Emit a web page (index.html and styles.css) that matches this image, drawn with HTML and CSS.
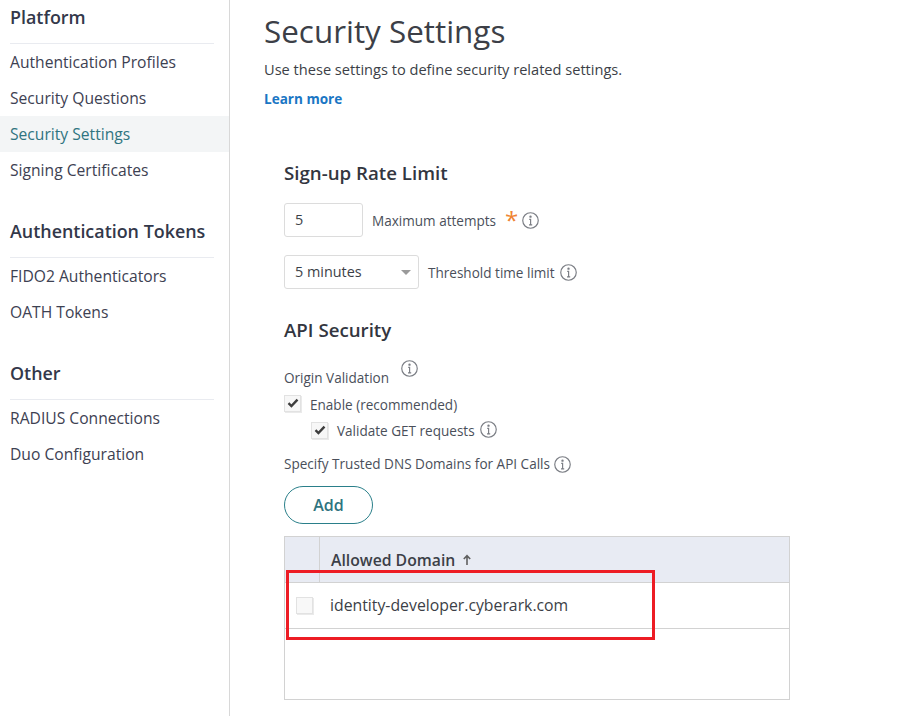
FILE: index.html
```html
<!DOCTYPE html>
<html lang="en">
<head>
<meta charset="utf-8">
<title>Security Settings</title>
<link rel="stylesheet" href="styles.css">
</head>
<body>
<div class="app">
  <nav class="sidebar">
    <h2 class="nav-head first">Platform</h2>
    <a class="nav-item">Authentication Profiles</a>
    <a class="nav-item">Security Questions</a>
    <a class="nav-item active">Security Settings</a>
    <a class="nav-item">Signing Certificates</a>
    <h2 class="nav-head">Authentication Tokens</h2>
    <a class="nav-item">FIDO2 Authenticators</a>
    <a class="nav-item">OATH Tokens</a>
    <h2 class="nav-head">Other</h2>
    <a class="nav-item">RADIUS Connections</a>
    <a class="nav-item">Duo Configuration</a>
  </nav>
  <main class="main">
    <h1 class="title">Security Settings</h1>
    <p class="desc">Use these settings to define security related settings.</p>
    <a class="learn">Learn more</a>
    <section class="form">
      <h3 class="sec-head rate">Sign-up Rate Limit</h3>
      <div class="row row-attempts">
        <div class="input">5</div>
        <span class="label">Maximum attempts</span>
        <span class="star">*</span>
        <svg class="info" viewBox="0 0 16 16"><circle cx="8" cy="8" r="7.3"/><circle class="dot" cx="8" cy="4.4" r="1.1"/><path d="M6.8 7h1.3v5M6.6 12.1h3"/></svg>
      </div>
      <div class="row row-threshold">
        <div class="select">5 minutes<span class="caret"></span></div>
        <span class="label">Threshold time limit</span>
        <svg class="info" viewBox="0 0 16 16"><circle cx="8" cy="8" r="7.3"/><circle class="dot" cx="8" cy="4.4" r="1.1"/><path d="M6.8 7h1.3v5M6.6 12.1h3"/></svg>
      </div>
      <h3 class="sec-head api">API Security</h3>
      <div class="origin">
        <span class="label">Origin Validation</span>
        <svg class="info raised" viewBox="0 0 16 16"><circle cx="8" cy="8" r="7.3"/><circle class="dot" cx="8" cy="4.4" r="1.1"/><path d="M6.8 7h1.3v5M6.6 12.1h3"/></svg>
      </div>
      <div class="check-row enable">
        <span class="check"><svg viewBox="0 0 12 10"><path d="M1.5 5.2 4.4 8 10.5 1.6"/></svg></span>
        <span class="label">Enable (recommended)</span>
      </div>
      <div class="check-row nested">
        <span class="check"><svg viewBox="0 0 12 10"><path d="M1.5 5.2 4.4 8 10.5 1.6"/></svg></span>
        <span class="label">Validate GET requests</span>
        <svg class="info" viewBox="0 0 16 16"><circle cx="8" cy="8" r="7.3"/><circle class="dot" cx="8" cy="4.4" r="1.1"/><path d="M6.8 7h1.3v5M6.6 12.1h3"/></svg>
      </div>
      <div class="trusted">
        <span class="label">Specify Trusted DNS Domains for API Calls</span>
        <svg class="info" viewBox="0 0 16 16"><circle cx="8" cy="8" r="7.3"/><circle class="dot" cx="8" cy="4.4" r="1.1"/><path d="M6.8 7h1.3v5M6.6 12.1h3"/></svg>
      </div>
      <button class="add" type="button">Add</button>
      <div class="grid">
        <div class="grid-head">
          <div class="cell-check"></div>
          <div class="cell-name">Allowed Domain <svg class="arrow" viewBox="0 0 10 12"><path d="M5 11V2M1.8 5 5 1.6 8.2 5"/></svg></div>
        </div>
        <div class="grid-row">
          <div class="cell-check body"><span class="check empty"></span></div>
          <div class="cell-value">identity-developer.cyberark.com</div>
        </div>
        <div class="grid-empty"></div>
        <div class="highlight"></div>
      </div>
    </section>
  </main>
</div>
</body>
</html>
```
FILE: styles.css
```css
* { box-sizing: border-box; }
html, body { margin: 0; padding: 0; background: #fff; }
body {
  width: 920px;
  height: 716px;
  overflow: hidden;
  font-family: "Open Sans", "Liberation Sans", sans-serif;
  color: #3a3f4b;
}
.app { display: flex; height: 716px; }
.sidebar {
  width: 230px;
  flex: none;
  border-right: 1px solid #d8d8d8;
  height: 716px;
}
.nav-head {
  margin: 31px 15px 0 10px;
  padding-bottom: 13px;
  height: 39px;
  border-bottom: 1px solid #e9ebf0;
  font-size: 17.9px;
  line-height: 25px;
  font-weight: 600;
  color: #33384a;
}
.nav-head.first { margin-top: 5px; }
.nav-item {
  display: block;
  height: 36px;
  padding-left: 10px;
  font-size: 15.65px;
  line-height: 36px;
  color: #3d4152;
}
.nav-item.active { background: #f3f5f6; color: #2f7480; }
.main { flex: 1; padding-left: 34px; min-width: 0; }
.title {
  margin: 10px 0 0;
  font-size: 31.4px;
  line-height: 41px;
  font-weight: 400;
  color: #3c3f47;
}
.desc { margin: 8px 0 0; font-size: 14.6px; line-height: 20px; color: #3c3f47; }
.learn {
  display: block;
  margin-top: 10px;
  font-size: 13.55px;
  line-height: 20px;
  font-weight: 700;
  color: #1a76c4;
}
.form { padding-left: 20px; width: 526px; }
.sec-head {
  margin: 0;
  font-size: 18.7px;
  line-height: 25px;
  font-weight: 600;
  color: #33363f;
}
.sec-head.rate { margin-top: 51px; }
.row { display: flex; align-items: center; }
.row-attempts { margin-top: 18px; height: 34px; }
.row-threshold { margin-top: 18px; height: 34px; }
.input, .select {
  height: 34px;
  border: 1px solid #dcdcdc;
  border-radius: 3px;
  font-size: 14.4px;
  line-height: 32px;
  padding-left: 10px;
  color: #3c3f47;
}
.input { width: 79px; }
.select { width: 135px; position: relative; }
.caret {
  position: absolute;
  right: 7px;
  top: 14px;
  width: 0;
  height: 0;
  border-left: 5px solid transparent;
  border-right: 5px solid transparent;
  border-top: 5px solid #9a9a9a;
}
.label { font-size: 13.55px; line-height: 20px; color: #4a4f5a; }
.row .label { margin-left: 9px; margin-top: 2px; }
.star {
  margin-left: 9px;
  font-size: 24px;
  line-height: 20px;
  height: 20px;
  color: #ef8433;
}
.info {
  width: 17px;
  height: 17px;
  flex: none;
  fill: none;
  stroke: #7a7d84;
  stroke-width: 1.1;
}
.info .dot { fill: #7a7d84; stroke: none; }
.row-attempts .info { margin-left: 4px; }
.row-threshold .info { margin-left: 5px; }
.sec-head.api { margin-top: 28px; }
.origin { display: flex; margin-top: 26px; height: 20px; align-items: center; }
.info.raised { margin-left: 12px; position: relative; top: -10px; }
.check-row { display: flex; align-items: center; height: 20px; margin-top: 6px; }
.check-row .check { margin-top: -2px; }
.check-row.enable .label { margin-top: 2px; }
.check-row .label { margin-left: 9px; }
.check-row .info { margin-left: 5px; position: relative; top: -2px; }
.check-row.nested { margin-top: 7px; padding-left: 27px; }
.check {
  width: 17px;
  height: 17px;
  flex: none;
  display: flex;
  align-items: center;
  justify-content: center;
  background: #f7f7f7;
  border: 1px solid #e2e2e2;
  box-shadow: 1px 1px 0 #eaeaea;
}
.check svg { width: 12px; height: 10px; fill: none; stroke: #3d3d3d; stroke-width: 2.4; }
.trusted { display: flex; align-items: center; height: 20px; margin-top: 13px; }
.trusted .info { margin-left: 4px; }
.add {
  display: block;
  margin-top: 12px;
  width: 89px;
  height: 38px;
  border: 1px solid #2a7f8a;
  border-radius: 19px;
  background: #fff;
  font-family: inherit;
  font-size: 16px;
  font-weight: 600;
  color: #2f7480;
  padding: 0;
}
.grid {
  position: relative;
  margin-top: 12px;
  width: 506px;
  height: 164px;
  border: 1px solid #d2d2d2;
}
.grid-head {
  display: flex;
  height: 46px;
  background: #e8ebf3;
  border-bottom: 1px solid #d2d2d2;
}
.cell-check { width: 35px; flex: none; border-right: 1px solid #d2d2d2; }
.cell-check.body { border-right: 0; display: flex; align-items: center; padding-left: 11px; }
.cell-name {
  padding-left: 11px;
  font-size: 15.75px;
  line-height: 47px;
  font-weight: 600;
  color: #3c3f47;
}
.arrow { width: 10px; height: 12px; margin-left: 3px; fill: none; stroke: #5f5f5f; stroke-width: 1.6; }
.grid-row { display: flex; height: 46px; border-bottom: 1px solid #d2d2d2; }
.cell-value { padding-left: 10px; font-size: 15.8px; line-height: 45px; color: #3c3f47; }
.check.empty { background: #f8f8f8; }
.highlight {
  position: absolute;
  left: 1px;
  top: 33px;
  width: 369px;
  height: 70px;
  border: 3px solid #ed1c24;
}
```
